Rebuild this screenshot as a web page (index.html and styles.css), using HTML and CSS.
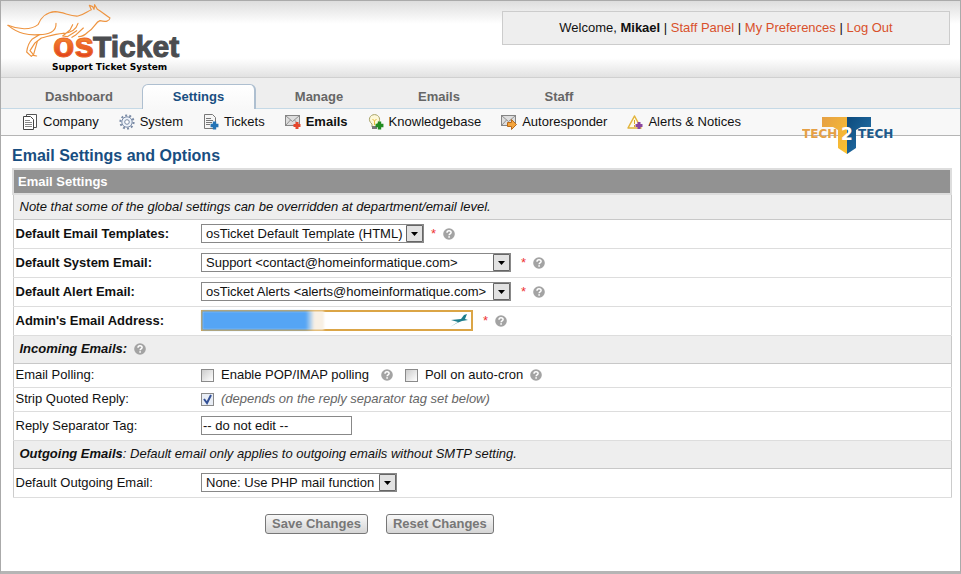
FILE: index.html
```html
<!DOCTYPE html>
<html lang="en">
<head>
    <meta charset="UTF-8">
    <meta name="viewport" content="width=device-width, initial-scale=1.0">
    <title>osTicket - Email Settings</title>
    <link rel="stylesheet" href="styles.css">
</head>
<body>
    <svg class="defs" width="0" height="0" aria-hidden="true">
        <defs>
            <linearGradient id="orange" x1="0" y1="0" x2="0" y2="1">
                <stop offset="0.3" stop-color="#f58a2e"/>
                <stop offset="0.8" stop-color="#e2421f"/>
            </linearGradient>
            <linearGradient id="gold" x1="0" y1="0" x2="1" y2="1">
                <stop offset="0" stop-color="#e5a045"/>
                <stop offset="1" stop-color="#fdc32e"/>
            </linearGradient>
            <linearGradient id="navy" x1="0" y1="0" x2="1" y2="1">
                <stop offset="0" stop-color="#0d4a7c"/>
                <stop offset="1" stop-color="#2676ae"/>
            </linearGradient>
            <symbol id="help" viewBox="0 0 12 12">
                <circle cx="6" cy="6" r="5.8" fill="#a3a3a3"/>
                <path d="M4 4.700c0-2.600 4.100-2.600 4.100-.2 0 1.400-2 1.400-2 2.700" fill="none" stroke="#fff" stroke-width="1.500"/>
                <rect x="5.300" y="8.200" width="1.600" height="1.500" fill="#fff"/>
            </symbol>
            <symbol id="envelope" viewBox="0 0 16 16">
                <rect x=".5" y="1.500" width="14" height="10" fill="#dedede" stroke="#858585"/>
                <path d="M1 2l6.500 5.500L14 2M1 11l4.500-5M14 11L9.500 6" fill="none" stroke="#929292"/>
            </symbol>
            <symbol id="plus" viewBox="0 0 8 8">
                <path d="M2.500.5h3v2h2v3h-2v2h-3v-2h-2v-3h2z" fill="currentColor"/>
            </symbol>
        </defs>
    </svg>

    <div class="container">
        <header class="header">
            <a href="#" class="logo" aria-label="osTicket Support Ticket System">
                <svg width="178" height="70" viewBox="0 0 178 70">
                    <g transform="scale(.3333) translate(-9 -6)" fill="none" stroke="#ee9440" stroke-width="3.500" stroke-linejoin="round" stroke-linecap="round">
                        <path d="M12 70C45 84 82 84 102 68C110 48 128 30 154 29C180 30 198 44 222 42C240 38 250 28 262 23L256 10L266 14L270 22L272 8L280 22C292 28 300 36 318 48C316 58 306 60 288 56C274 60 272 78 252 90C244 98 234 104 224 104"/>
                        <path d="M12 70C44 96 72 100 106 98L84 112C74 122 70 134 68 150L82 163L88 158L78 146L92 124L112 108C130 104 150 96 178 94"/>
                        <path d="M106 98C132 98 158 90 156 64M100 118L88 160L98 162M178 94C204 92 218 78 222 64M206 68L198 84L176 102L190 104L218 86M238 78L214 100L204 106"/>
                    </g>
                    <text x="46" y="53" class="logo-os" fill="url(#orange)">os</text>
                    <text x="86" y="53" class="logo-ticket">Ticket</text>
                    <text x="45" y="66" class="logo-sub">Support Ticket System</text>
                </svg>
            </a>
            <p class="info">Welcome, <strong>Mikael</strong> | <a href="#">Staff Panel</a> | <a href="#">My Preferences</a> | <a href="#">Log Out</a></p>
        </header>

        <nav class="tabs">
            <a href="#">Dashboard</a>
            <a href="#" class="active">Settings</a>
            <a href="#">Manage</a>
            <a href="#">Emails</a>
            <a href="#">Staff</a>
        </nav>

        <nav class="sub-nav">
            <a href="#"><svg class="icon" viewBox="0 0 16 16"><path d="M4.500.5h10v13h-10z" fill="#fff" stroke="#555"/><path d="M1.500 2.500h7l3 3v10h-10z" fill="#fff" stroke="#444"/><path d="M3 6.500h5M3 8.500h7M3 10.500h7M3 12.500h7" stroke="#888"/></svg>Company</a>
            <a href="#"><svg class="icon" viewBox="0 0 16 16"><circle cx="8" cy="8" r="6.600" fill="none" stroke="#7a8ba6" stroke-width="2" stroke-dasharray="2 2.150"/><circle cx="8" cy="8" r="5.200" fill="#eef3fa" stroke="#7a8ba6"/><circle cx="8" cy="8" r="2.300" fill="#fff" stroke="#7a8ba6"/></svg>System</a>
            <a href="#"><svg class="icon" viewBox="0 0 16 16"><path d="M1.500.5h8l3 3v11h-11z" fill="#f5f5f5" stroke="#777"/><path d="M3 4.500h5M3 6.500h7M3 8.500h6M3 10.500h4" stroke="#777"/><use href="#plus" x="7" y="7" width="9" height="9" color="#2373b5"/></svg>Tickets</a>
            <a href="#" class="active"><svg class="icon" viewBox="0 0 16 16"><use href="#envelope" width="16" height="16"/><use href="#plus" x="8" y="7" width="8" height="9" color="#e5472d"/></svg>Emails</a>
            <a href="#"><svg class="icon" viewBox="0 0 16 16"><path d="M4 10C-1 6 2 .6 6.500.6S14 6 9 10v3H4z" fill="#fdf8d8" stroke="#a8a36a"/><path d="M4.500 5l2 2 2-2M6.500 7v4" fill="none" stroke="#e6bd3c"/><path d="M4 12h5v3H4z" fill="#777"/><use href="#plus" x="7" y="7" width="9" height="9" color="#218c21"/></svg>Knowledgebase</a>
            <a href="#"><svg class="icon" viewBox="0 0 16 16"><use href="#envelope" width="16" height="16"/><path d="M6.500 8.500h4v-3l5 5-5 5v-3h-4z" fill="#f4a43c" stroke="#b86a1c"/></svg>Autoresponder</a>
            <a href="#"><svg class="icon" viewBox="0 0 16 16"><path d="M7.500 2L14 14H1z" fill="#fffbe8" stroke="#e2b43c" stroke-width="1.500" stroke-linejoin="round"/><path d="M7.500 6v4M7.500 11v2" stroke="#d9a528"/><use href="#plus" x="8" y="7" width="8" height="9" color="#8a45a0"/></svg>Alerts &amp; Notices</a>
        </nav>

        <svg class="watermark" width="92" height="40" viewBox="0 0 92 40" role="img" aria-label="Tech2Tech">
            <path d="M20 1h25v37l-9-6V14l-5-3H20z" fill="url(#gold)"/>
            <path d="M45 1h24v10H59l-5 3v18l-9 6z" fill="url(#navy)"/>
            <text x="0" y="22" class="mark" fill="#e5a045">TECH</text>
            <text x="56" y="22" class="mark" fill="#1d5a8c">TECH</text>
            <text x="45" y="24" class="mark-two">2</text>
        </svg>

        <main class="content">
            <h1>Email Settings and Options</h1>
            <form action="#">
                <table class="settings">
                    <thead>
                        <tr><th colspan="2" class="title">Email Settings</th></tr>
                        <tr><td colspan="2" class="note">Note that some of the global settings can be overridden at department/email level.</td></tr>
                    </thead>
                    <tbody>
                        <tr>
                            <th><label for="template">Default Email Templates:</label></th>
                            <td><div class="field"><select id="template" class="short"><option>osTicket Default Template (HTML)</option></select><span class="required">*</span><svg class="help"><use href="#help"/></svg></div></td>
                        </tr>
                        <tr>
                            <th><label for="system">Default System Email:</label></th>
                            <td><div class="field"><select id="system" class="long"><option>Support &lt;contact@homeinformatique.com&gt;</option></select><span class="required">*</span><svg class="help"><use href="#help"/></svg></div></td>
                        </tr>
                        <tr>
                            <th><label for="alert">Default Alert Email:</label></th>
                            <td><div class="field"><select id="alert" class="long"><option>osTicket Alerts &lt;alerts@homeinformatique.com&gt;</option></select><span class="required">*</span><svg class="help"><use href="#help"/></svg></div></td>
                        </tr>
                        <tr>
                            <th><label for="admin">Admin's Email Address:</label></th>
                            <td><div class="field"><span class="admin"><input type="text" id="admin"><span class="redacted"></span><svg class="bird" viewBox="0 0 20 14"><path d="M1 13l8-5-7-2 10-1 3-4 3-1-2 5 3 1-6 1-5 2z" fill="#1d7d8c"/></svg></span><span class="required">*</span><svg class="help"><use href="#help"/></svg></div></td>
                        </tr>
                        <tr><td colspan="2" class="note section"><strong>Incoming Emails:</strong><svg class="help"><use href="#help"/></svg></td></tr>
                        <tr class="slim">
                            <td>Email Polling:</td>
                            <td><div class="field"><input type="checkbox" id="polling"><label for="polling">Enable POP/IMAP polling</label><svg class="help far"><use href="#help"/></svg><input type="checkbox" id="cron" class="second"><label for="cron">Poll on auto-cron</label><svg class="help"><use href="#help"/></svg></div></td>
                        </tr>
                        <tr class="slim">
                            <td>Strip Quoted Reply:</td>
                            <td><div class="field"><input type="checkbox" id="strip" checked><label for="strip" class="faded">(depends on the reply separator tag set below)</label></div></td>
                        </tr>
                        <tr>
                            <td><label for="separator">Reply Separator Tag:</label></td>
                            <td><div class="field"><input type="text" id="separator" class="separator" value="-- do not edit --"></div></td>
                        </tr>
                        <tr><td colspan="2" class="note section"><strong>Outgoing Emails</strong>: Default email only applies to outgoing emails without SMTP setting.</td></tr>
                        <tr>
                            <td><label for="outgoing">Default Outgoing Email:</label></td>
                            <td><div class="field"><select id="outgoing" class="mail"><option>None: Use PHP mail function</option></select></div></td>
                        </tr>
                    </tbody>
                </table>
                <div class="buttons">
                    <button type="submit">Save Changes</button>
                    <button type="reset">Reset Changes</button>
                </div>
            </form>
        </main>
    </div>
</body>
</html>
```
FILE: styles.css
```css
* {
    box-sizing: border-box;
}
body {
    margin: 0;
    font-family: "Liberation Sans", Arial, sans-serif;
    font-size: 13px;
    line-height: 16px;
    color: #111;
    background: #fff;
}
a {
    text-decoration: none;
}
.defs {
    position: absolute;
}
.container {
    position: relative;
    min-height: 100vh;
    border: 1px solid #aaa;
    border-bottom: 3px solid #b5b5b5;
}
.header {
    display: flex;
    justify-content: space-between;
    align-items: flex-start;
    height: 77px;
    padding: 0 10px 0 6px;
    border-bottom: 1px solid #d0d0d0;
    background: linear-gradient(#ddd, #fff 30%, #fff 75%, #e2e2e2);
}
.logo svg {
    display: block;
    margin-top: 3px;
    overflow: visible;
}
.logo-os {
    font: bold 35px/1 "Liberation Sans", Arial, sans-serif;
    stroke: #ea6526;
}
.logo-ticket {
    font: bold 30px/1 "Liberation Sans", Arial, sans-serif;
    fill: #4b4d50;
    stroke: #4b4d50;
}
.logo-sub {
    font: bold 9px/1 "DejaVu Sans", Verdana, sans-serif;
    fill: #000;
}
.info {
    width: 448px;
    margin: 10px 0 0;
    padding: 8px;
    border: 1px solid #ccc;
    background: #eee;
    text-align: center;
}
.info a {
    color: #d9512c;
}
.tabs {
    display: flex;
    height: 31px;
    padding: 6px 0 0 21px;
    border-bottom: 1px solid #c5d9e6;
    background: #eee;
}
.tabs a {
    width: 114px;
    height: 25px;
    margin-right: 6px;
    padding-top: 4px;
    border: 1px solid transparent;
    color: #666;
    font-weight: bold;
    text-align: center;
}
.tabs .active {
    border-color: #aebfd0;
    border-bottom: 0;
    border-right-width: 2px;
    border-radius: 6px 6px 0 0;
    background: linear-gradient(#fff, #f8f8f8);
    color: #184e81;
}
.sub-nav {
    display: flex;
    gap: 20px;
    height: 27px;
    align-items: center;
    padding-left: 21px;
    border-bottom: 1px solid #b5b5b5;
    background: #f8f8f8;
}
.sub-nav a {
    display: flex;
    align-items: center;
    gap: 5px;
    color: #111;
    white-space: nowrap;
}
.sub-nav .active {
    font-weight: bold;
}
.icon {
    width: 16px;
    height: 16px;
}
.watermark {
    position: absolute;
    top: 115px;
    right: 66px;
}
.mark {
    font: bold 12px "DejaVu Sans", sans-serif;
}
.mark-two {
    font: bold 17px "DejaVu Sans", sans-serif;
    fill: #fff;
    text-anchor: middle;
}
.content {
    padding: 10px 8px 0 11px;
}
h1 {
    margin: 0 0 3px;
    font-size: 16px;
    line-height: 19px;
    color: #184e81;
}
.settings {
    width: 100%;
    border-collapse: collapse;
    border: 1px solid #ccc;
}
.settings td,
.settings tbody th {
    height: 29px;
    padding: 0 2px;
    border-bottom: 1px solid #ddd;
    text-align: left;
}
.settings tbody th,
.settings tbody td:first-child {
    width: 186px;
}
.settings .slim td {
    height: 24px;
}
.settings .title {
    height: 25px;
    padding: 0 4px;
    border: 2px solid #ddd;
    background: #929292;
    color: #fff;
    text-align: left;
}
.settings .note {
    height: 25px;
    padding: 0 6px;
    border: 1px solid #c8c8c8;
    background: #eee;
    font-style: italic;
}
.settings .section {
    height: 28px;
}
.field {
    display: flex;
    align-items: center;
}
select,
input[type="text"] {
    height: 19px;
    padding: 0 4px;
    border: 1px solid #888;
    border-radius: 0;
    background: #fff;
    color: #111;
    font: inherit;
}
select {
    appearance: none;
    background: #fff url("data:image/svg+xml,%3Csvg xmlns='http://www.w3.org/2000/svg' width='17' height='17'%3E%3Cpath d='M.5.5h16v16H.5z' fill='%23e2e2e2' stroke='%23666'/%3E%3Cpath d='M5 7h7l-3.500 4z'/%3E%3C/svg%3E") right center no-repeat;
}
.short {
    width: 223px;
}
.long {
    width: 310px;
}
.mail {
    width: 196px;
}
.required {
    margin-left: 7px;
    color: #e33;
}
.long + .required,
.admin + .required {
    margin-left: 10px;
}
.help {
    width: 12px;
    height: 12px;
    margin-left: 7px;
}
.far {
    margin-left: 12px;
}
.section .help {
    vertical-align: -2px;
}
.admin {
    position: relative;
    display: flex;
}
.admin input {
    width: 272px;
    height: 21px;
    border: 2px solid #dba546;
}
.redacted {
    position: absolute;
    top: 1px;
    left: 1px;
    width: 122px;
    height: 19px;
    background: linear-gradient(to right, #55a5f5 85%, #f8f0e4 92%);
    filter: blur(1px);
}
.bird {
    position: absolute;
    top: 4px;
    right: 4px;
    width: 20px;
    height: 14px;
}
input[type="checkbox"] {
    appearance: none;
    width: 13px;
    height: 13px;
    margin: 0 7px 0 0;
    border: 1px solid #8a8a8a;
    background: linear-gradient(135deg, #ccc, #fff);
}
input[type="checkbox"]:checked {
    background: url("data:image/svg+xml,%3Csvg xmlns='http://www.w3.org/2000/svg' width='11' height='11'%3E%3Cpath d='M2 5l3 4 4-8' fill='none' stroke='%23335096' stroke-width='2'/%3E%3C/svg%3E") #e8edf5;
}
.field .second {
    margin-left: 12px;
}
.faded {
    color: #666;
    font-style: italic;
}
.settings .separator {
    width: 151px;
    padding: 0 1px;
}
.buttons {
    display: flex;
    gap: 18px;
    padding: 16px 0 0 253px;
}
button {
    height: 20px;
    padding: 0 6px;
    border: 1px solid #777;
    border-radius: 3px;
    background: linear-gradient(#f8f8f8, #d5d5d5);
    color: #777;
    font: inherit;
    font-weight: bold;
}
```
